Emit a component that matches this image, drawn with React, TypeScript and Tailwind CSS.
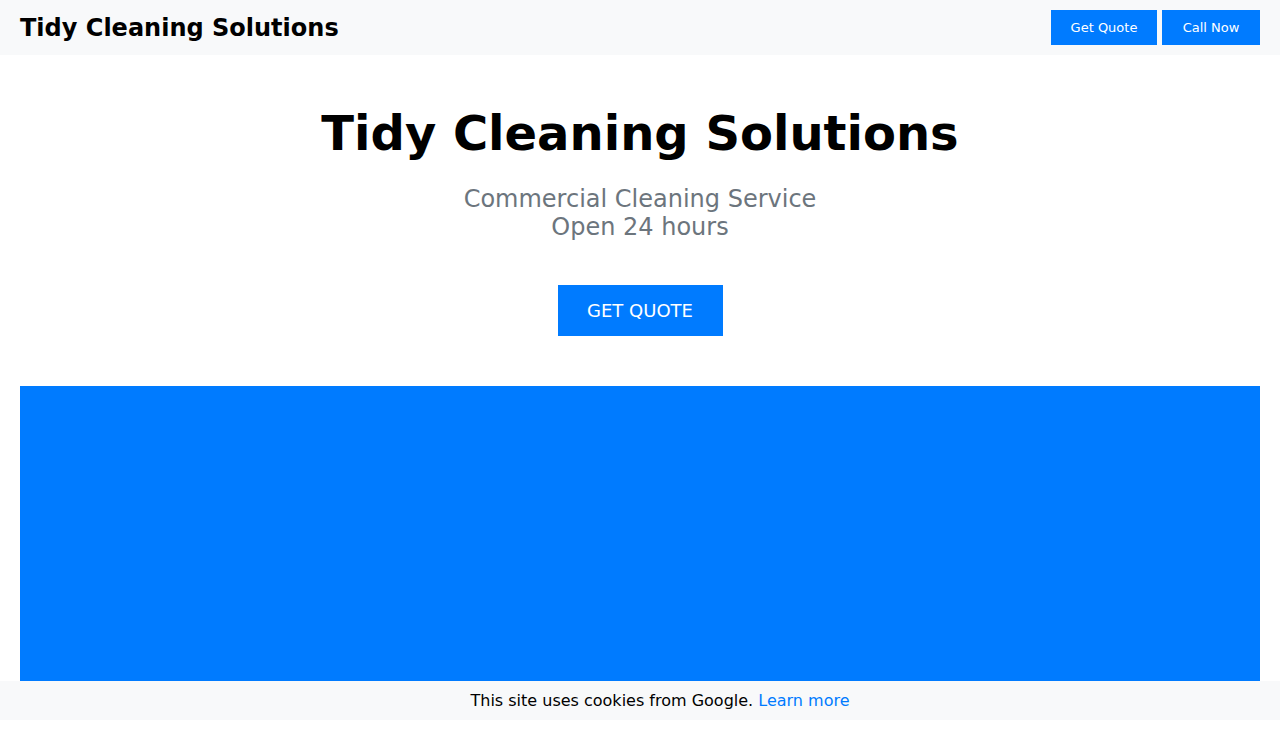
export default function App() {
  return (
    <div className="bg-white text-black pb-[16px]" style={{ fontFamily: '"DejaVu Sans", sans-serif' }}>
      {/* ── Top bar ── */}
      <header className="h-[55px] bg-[#f8f9fa] flex items-center justify-between px-5">
        <span className="text-[24px] font-bold leading-none">Tidy Cleaning Solutions</span>
        <div className="flex gap-[5px]">
          <a href="#" className="h-[35px] w-[106px] flex items-center justify-center bg-[#007bff] text-white text-[13px]">
            Get Quote
          </a>
          <a href="#" className="h-[35px] w-[98px] flex items-center justify-center bg-[#007bff] text-white text-[13px]">
            Call Now
          </a>
        </div>
      </header>

      {/* ── Hero ── */}
      <section className="flex flex-col items-center text-center pt-[50px]">
        <h1 className="text-[48px] font-bold leading-[1.2]">Tidy Cleaning Solutions</h1>
        <p className="mt-[22px] text-[24px] leading-[1.2] text-[#6c757d]">
          Commercial Cleaning Service
          <br />
          Open 24 hours
        </p>
        <a href="#" className="mt-[43px] w-[165px] h-[51px] flex items-center justify-center bg-[#007bff] text-white text-[18px]">
          GET QUOTE
        </a>
      </section>

      {/* ── Banner block ── */}
      <div className="mx-5 mt-[50px] h-[295px] bg-[#007bff]" />

      {/* ── Cookie notice ── */}
      <div className="h-[39px] bg-[#f8f9fa] flex items-center justify-center pl-[40px] text-[16px]">
        <span>
          This site uses cookies from Google.{' '}
          <a href="#" className="text-[#007bff]">Learn more</a>
        </span>
      </div>
    </div>
  )
}
